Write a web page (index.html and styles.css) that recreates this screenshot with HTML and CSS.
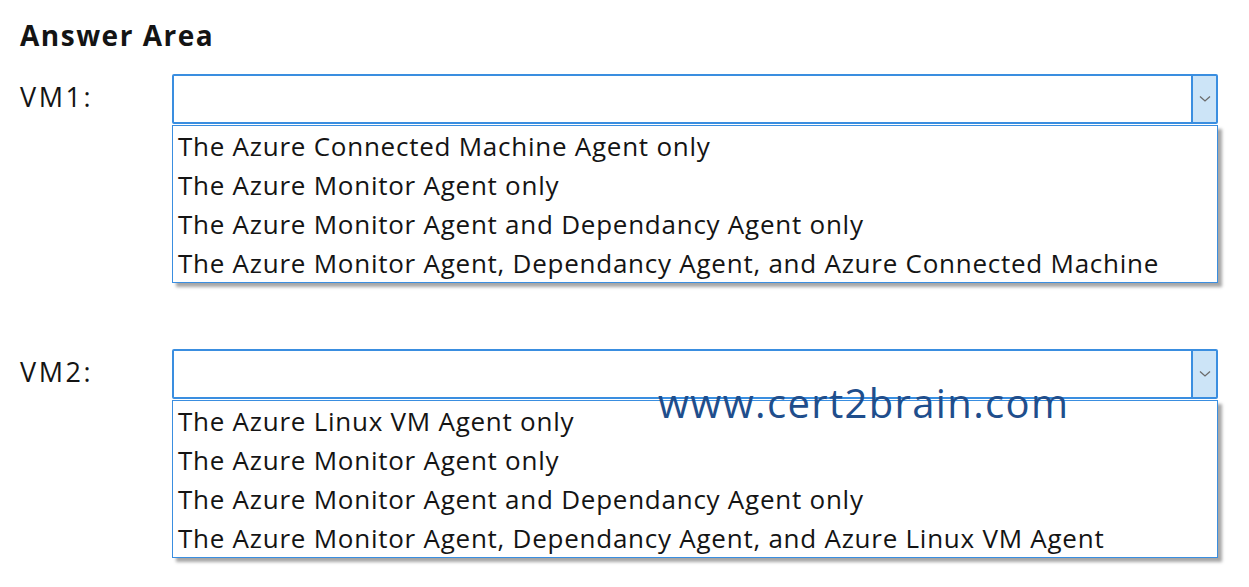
FILE: index.html
```html
<!DOCTYPE html>
<html lang="en">
<head>
    <meta charset="UTF-8">
    <meta name="viewport" content="width=device-width, initial-scale=1.0">
    <title>Answer Area</title>
    <link rel="stylesheet" href="styles.css">
</head>
<body>
    <div class="page">
        <h1>Answer Area</h1>

        <div class="row">
            <div class="label">VM1:</div>
            <div class="dropdown">
                <div class="select">
                    <span class="arrow">
                        <svg width="12" height="8" viewBox="0 0 12 8"><path d="M1 1.5 L6 6 L11 1.5" fill="none" stroke="#6b6b6b" stroke-width="1.3"/></svg>
                    </span>
                </div>
                <ul class="options">
                    <li>The Azure Connected Machine Agent only</li>
                    <li>The Azure Monitor Agent only</li>
                    <li>The Azure Monitor Agent and Dependancy Agent only</li>
                    <li>The Azure Monitor Agent, Dependancy Agent, and Azure Connected Machine</li>
                </ul>
            </div>
        </div>

        <div class="row second">
            <div class="label">VM2:</div>
            <div class="dropdown">
                <div class="select">
                    <span class="arrow">
                        <svg width="12" height="8" viewBox="0 0 12 8"><path d="M1 1.5 L6 6 L11 1.5" fill="none" stroke="#6b6b6b" stroke-width="1.3"/></svg>
                    </span>
                </div>
                <ul class="options">
                    <li>The Azure Linux VM Agent only</li>
                    <li>The Azure Monitor Agent only</li>
                    <li>The Azure Monitor Agent and Dependancy Agent only</li>
                    <li>The Azure Monitor Agent, Dependancy Agent, and Azure Linux VM Agent</li>
                </ul>
            </div>
        </div>

        <div class="watermark">www.cert2brain.com</div>
    </div>
</body>
</html>
```

FILE: styles.css
```css
body {
    margin: 0;
    padding: 0;
    background: #fff;
    color: #141414;
    font-family: "Open Sans", "Noto Sans", sans-serif;
}

.page {
    position: relative;
    width: 1249px;
    height: 587px;
    padding: 16px 0 0 20px;
    box-sizing: border-box;
}

h1 {
    margin: 0;
    font-size: 28px;
    font-weight: bold;
    line-height: 38px;
    letter-spacing: 1.5px;
}

.row {
    display: flex;
    margin-top: 20px;
}

.row.second {
    margin-top: 66px;
}

.label {
    width: 152px;
    font-size: 27px;
    line-height: 46px;
    letter-spacing: 2.6px;
}

.dropdown {
    width: 1046px;
}

.select {
    height: 46px;
    border: 2px solid #3a8ee0;
    border-radius: 2px;
    display: flex;
    justify-content: flex-end;
}

.arrow {
    width: 23px;
    background: #cce4f7;
    border-left: 2px solid #3a8ee0;
    display: flex;
    align-items: center;
    justify-content: center;
}

.options {
    list-style: none;
    margin: 1px 0 0;
    padding: 1px 0 1px 5px;
    height: 154px;
    border: 1px solid #3a8ee0;
    box-shadow: 4px 4px 3px rgba(0, 0, 0, 0.35);
    background: #fff;
}

.options li {
    font-size: 26px;
    line-height: 39px;
    white-space: nowrap;
    letter-spacing: 0.75px;
}

.watermark {
    position: absolute;
    left: 658px;
    top: 375px;
    font-size: 40px;
    line-height: 56px;
    color: #1f4e8c;
    letter-spacing: 1.35px;
}
```
